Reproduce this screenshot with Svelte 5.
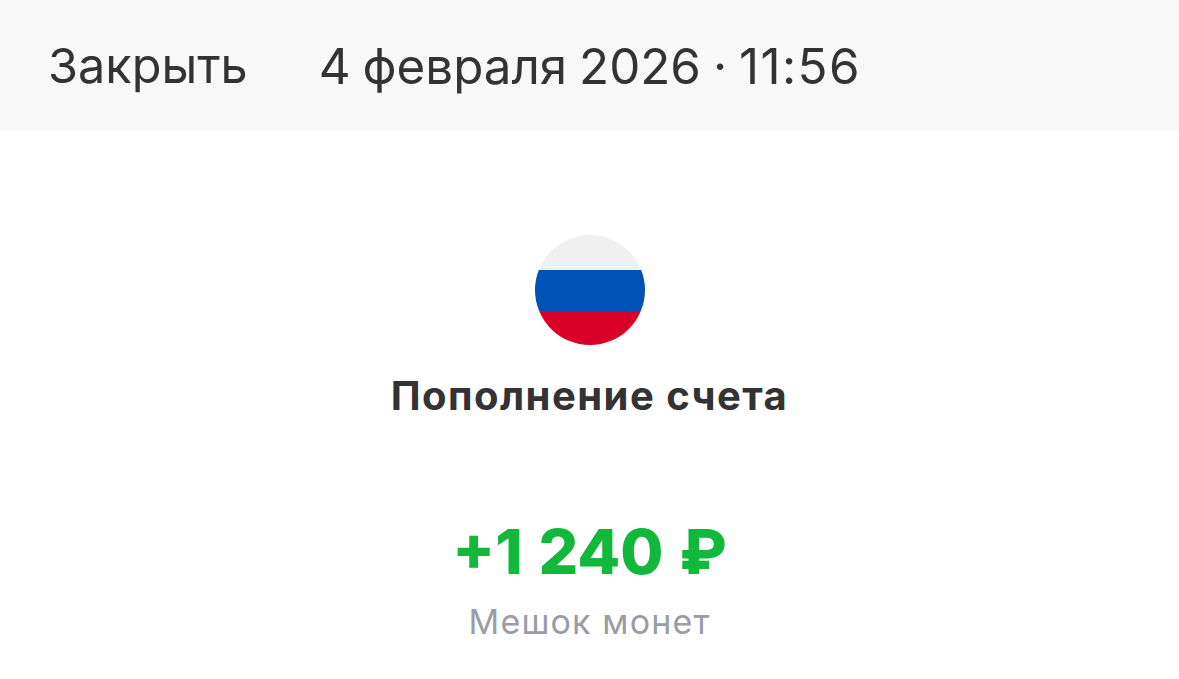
<script>
	const closeLabel = 'Закрыть';
	const dateLabel = '4 февраля 2026 ·';
	const timeLabel = '11:56';
</script>

<div class="screen">
	<header class="topbar">
		<span class="topbar__close">{closeLabel}</span>
		<span class="topbar__date">{dateLabel} <span class="topbar__time">{timeLabel}</span></span>
	</header>

	<main class="details">
		<svg class="flag" viewBox="0 0 110 110" width="110" height="110" aria-hidden="true">
			<defs>
				<clipPath id="flag-circle"><circle cx="55" cy="55" r="55" /></clipPath>
			</defs>
			<g clip-path="url(#flag-circle)">
				<rect width="110" height="35" fill="#f0f0f0" />
				<rect y="35" width="110" height="41" fill="#0052b4" />
				<rect y="76" width="110" height="34" fill="#d80027" />
			</g>
		</svg>
		<h1 class="details__title">Пополнение счета</h1>
		<p class="details__amount">+1 240 ₽</p>
		<p class="details__source">Мешок монет</p>
	</main>
</div>

<style>
	:global(body) {
		background: #fff;
	}

	.screen {
		font-family: Inter, 'Liberation Sans', sans-serif;
		height: 679px;
		overflow: hidden;
	}

	.topbar {
		display: flex;
		align-items: center;
		gap: 71px;
		height: 131px;
		padding-left: 48px;
		box-sizing: border-box;
		background: #f8f8f8;
		color: #333;
		font-size: 48.6px;
		white-space: nowrap;
	}

	.topbar__date {
		font-size: 49.3px;
		word-spacing: -1.9px;
	}

	.topbar__time {
		letter-spacing: 1.4px;
	}

	.details {
		display: flex;
		flex-direction: column;
		align-items: center;
		padding-top: 104px;
	}

	.flag {
		display: block;
	}

	.details__title {
		margin: 28px 0 0;
		font-size: 40px;
		line-height: 46px;
		font-weight: 700;
		letter-spacing: 1.45px;
		color: #333;
	}

	.details__amount {
		margin: 96px 0 0;
		font-size: 62.5px;
		line-height: 72px;
		font-weight: 800;
		word-spacing: 2px;
		color: #12b83c;
	}

	.details__source {
		margin: 14px 0 0;
		font-size: 34px;
		line-height: 42px;
		letter-spacing: 1.15px;
		color: #9a9da5;
	}
</style>
